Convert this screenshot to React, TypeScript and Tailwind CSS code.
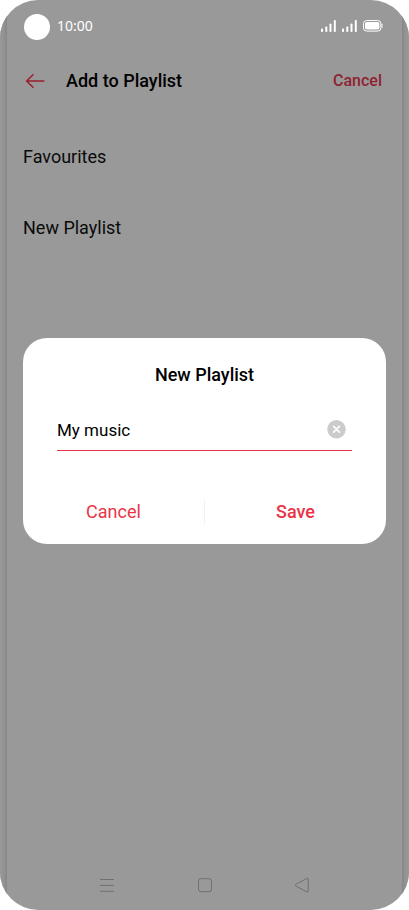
import { useState } from "react";

const playlists = ["Favourites", "New Playlist"];

function SignalIcon() {
  return (
    <svg width="15" height="12" viewBox="0 0 15 12" fill="currentColor" aria-hidden="true">
      <rect x="0" y="8.5" width="2" height="3.5" rx="0.8" />
      <rect x="4.3" y="6.5" width="2" height="5.5" rx="0.8" />
      <rect x="8.5" y="3.5" width="2" height="8.5" rx="0.8" />
      <rect x="12.8" y="0" width="2" height="12" rx="0.8" />
    </svg>
  );
}

function BatteryIcon() {
  return (
    <svg width="20" height="12" viewBox="0 0 20 12" fill="none" aria-hidden="true">
      <rect x="0.5" y="0.5" width="17.4" height="10.6" rx="3.2" stroke="white" />
      <rect x="2" y="2" width="14.4" height="7.6" rx="1.8" fill="white" />
      <path d="M19 4.2v3.2" stroke="white" strokeLinecap="round" />
    </svg>
  );
}

function StatusBar() {
  return (
    <div className="flex h-[54px] items-center px-[17px] text-white">
      <span className="size-6.5 rounded-full bg-white" />
      <div className="flex flex-1 items-center justify-between pb-0.5 pl-[7px]">
        <span className="font-['Noto_Sans',sans-serif] text-sm">10:00</span>
        <div className="flex items-center gap-1.5 pr-0.5">
          <SignalIcon />
          <SignalIcon />
          <BatteryIcon />
        </div>
      </div>
    </div>
  );
}

function Header() {
  return (
    <header className="flex h-[54px] items-center px-4">
      <button type="button" aria-label="Back" className="ml-0.5 text-[#9a1f2e]">
        <svg width="21" height="16" viewBox="0 0 21 16" fill="none" stroke="currentColor" strokeWidth="1.5" strokeLinecap="round" strokeLinejoin="round">
          <path d="M18.8 8H1.8M8 1.8L1.6 8 8 14.2" />
        </svg>
      </button>
      <h1 className="ml-5 text-lg font-medium text-black">Add to Playlist</h1>
      <button type="button" className="ml-auto pr-1 text-base font-medium text-[#8f2331]">
        Cancel
      </button>
    </header>
  );
}

function NavBar() {
  return (
    <nav className="mt-auto flex h-[50px] items-center justify-center gap-20 text-[#707070]">
      <button type="button" aria-label="Recent apps">
        <svg width="18" height="16" viewBox="0 0 18 16" fill="none" stroke="currentColor">
          <path d="M2 2.5h14M2 8.4h14M2 14.3h14" />
        </svg>
      </button>
      <button type="button" aria-label="Home">
        <svg width="18" height="16" viewBox="0 0 18 16" fill="none" stroke="currentColor">
          <rect x="2.5" y="1.7" width="13" height="13" rx="2.5" />
        </svg>
      </button>
      <button type="button" aria-label="Back">
        <svg width="18" height="16" viewBox="0 0 18 16" fill="none" stroke="currentColor" strokeLinejoin="round">
          <path d="M13.2 1.3L1.8 7.3q-1.3.9 0 1.8L13.2 15q1 .3 1-.8V2q0-1-1-.7z" />
        </svg>
      </button>
    </nav>
  );
}

function NewPlaylistDialog() {
  const [name, setName] = useState("My music");

  return (
    <div className="absolute inset-0 flex items-center px-4 pb-7">
      <div role="dialog" aria-labelledby="dialog-title" className="w-full rounded-3xl bg-white">
        <h2 id="dialog-title" className="pt-[23px] text-center text-lg leading-7 font-medium text-black">
          New Playlist
        </h2>
        <div className="mx-8.5 mt-[27px] flex h-[35px] items-start border-b border-[#ea3447]">
          <input
            aria-label="Playlist name"
            value={name}
            onChange={(e) => setName(e.target.value)}
            className="min-w-0 flex-1 text-[17px] leading-7 text-black outline-none"
          />
          <button type="button" aria-label="Clear" onClick={() => setName("")} className="mt-1 mr-1.5">
            <svg width="19" height="19" viewBox="0 0 19 19" fill="none">
              <circle cx="9.5" cy="9.2" r="9.2" fill="#cbcbcb" />
              <path d="M6.6 6.3l5.8 5.8M12.4 6.3l-5.8 5.8" stroke="white" strokeWidth="1.7" strokeLinecap="round" />
            </svg>
          </button>
        </div>
        <div className="mt-[47px] mb-[18px] flex h-7 items-center text-lg text-[#ea3447]">
          <button type="button" className="flex-1">
            Cancel
          </button>
          <span className="h-6 w-px bg-[#f1f1f1]" />
          <button type="button" className="flex-1 font-medium">
            Save
          </button>
        </div>
      </div>
    </div>
  );
}

export default function App() {
  return (
    <div className="min-h-screen bg-white font-['Roboto',sans-serif]">
      <div className="relative flex min-h-screen overflow-hidden rounded-[38px] bg-[#999]">
        <div className="w-[7px] bg-[linear-gradient(to_right,#999,#929292_60%,#868686)]" />
        <main className="relative flex flex-1 flex-col">
          <StatusBar />
          <Header />
          <ul className="mt-[13px]">
            {playlists.map((playlist) => (
              <li key={playlist} className="flex h-[71px] items-center px-4 text-lg text-[#0a0a0a]">
                {playlist}
              </li>
            ))}
          </ul>
          <NavBar />
          <NewPlaylistDialog />
        </main>
        <div className="w-[7px] bg-[linear-gradient(to_left,#999,#929292_60%,#868686)]" />
      </div>
    </div>
  );
}
